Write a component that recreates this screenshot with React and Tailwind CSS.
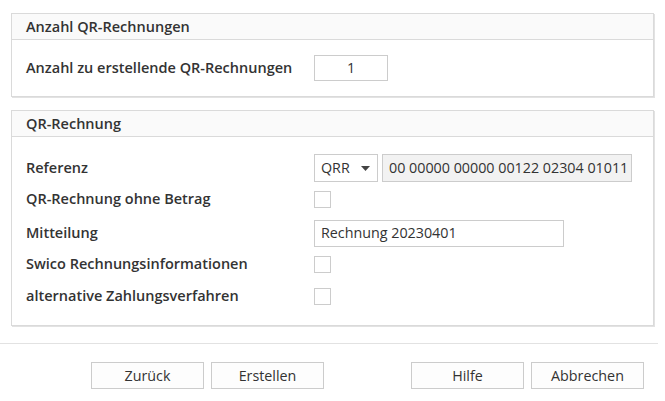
import React from 'react';

const font = { fontFamily: '"Open Sans", "Noto Sans", sans-serif' };

const Panel = ({ title, children, className = '' }) => (
  <div className={`mx-[11px] border border-[#dadada] shadow-[1px_1px_0_#e2e2e2] bg-white ${className}`}>
    <div className="h-[26px] flex items-center px-[14px] bg-[#fafafa] border-b border-[#dadada] text-[14.5px] font-semibold text-[#333]">
      {title}
    </div>
    {children}
  </div>
);

const Row = ({ label, children, className = '' }) => (
  <div className={`flex items-center h-[30px] ${className}`}>
    <div className="w-[302px] pl-[14px] text-[14.5px] font-semibold text-[#333] whitespace-nowrap">{label}</div>
    {children}
  </div>
);

const Checkbox = () => <div className="w-[17px] h-[17px] border border-[#cccccc] bg-white" />;

const Button = ({ children }) => (
  <button className="w-[113px] h-[27px] border border-[#cccccc] bg-[#fdfdfd] text-[14.3px] text-[#333]">
    {children}
  </button>
);

export default function App() {
  return (
    <div className="w-[665px] h-[401px] bg-white overflow-hidden pt-[13px]" style={font}>
      <Panel title="Anzahl QR-Rechnungen">
        <div className="pt-[13px] pb-[13px]">
          <Row label="Anzahl zu erstellende QR-Rechnungen">
            <div className="w-[74px] h-[26px] border border-[#cccccc] flex items-center justify-center text-[14.3px] text-[#333]">1</div>
          </Row>
        </div>
      </Panel>

      <Panel title="QR-Rechnung" className="mt-[13px]">
        <div className="pt-[16px] pb-[14px] flex flex-col">
          <Row label="Referenz">
            <div className="w-[64px] h-[28px] border border-[#cccccc] flex items-center justify-between pl-[6px] pr-[7px] text-[14.3px] text-[#333]">
              <span>QRR</span>
              <svg width="9" height="5" viewBox="0 0 9 5"><path d="M0 0h9L4.5 5z" fill="#444" /></svg>
            </div>
            <div className="ml-[4px] w-[250px] h-[28px] border border-[#cccccc] bg-[#f2f2f2] flex items-center pl-[6px] text-[14.3px] text-[#333] whitespace-nowrap">
              00 00000 00000 00122 02304 01011
            </div>
          </Row>
          <Row label="QR-Rechnung ohne Betrag" className="mt-[1px]">
            <Checkbox />
          </Row>
          <Row label="Mitteilung" className="mt-[4px]">
            <div className="w-[250px] h-[27px] border border-[#cccccc] flex items-center pl-[6px] text-[14.3px] text-[#333]">
              Rechnung 20230401
            </div>
          </Row>
          <Row label="Swico Rechnungsinformationen" className="mt-[1px]">
            <Checkbox />
          </Row>
          <Row label="alternative Zahlungsverfahren" className="mt-[2px]">
            <Checkbox />
          </Row>
        </div>
      </Panel>

      <div className="mt-[17px] w-[658px] border-t border-[#e2e2e2]" />

      <div className="flex mt-[18px] pl-[91px]">
        <div className="flex gap-[7px]">
          <Button>Zurück</Button>
          <Button>Erstellen</Button>
        </div>
        <div className="flex gap-[7px] ml-[87px]">
          <Button>Hilfe</Button>
          <Button>Abbrechen</Button>
        </div>
      </div>
    </div>
  );
}
